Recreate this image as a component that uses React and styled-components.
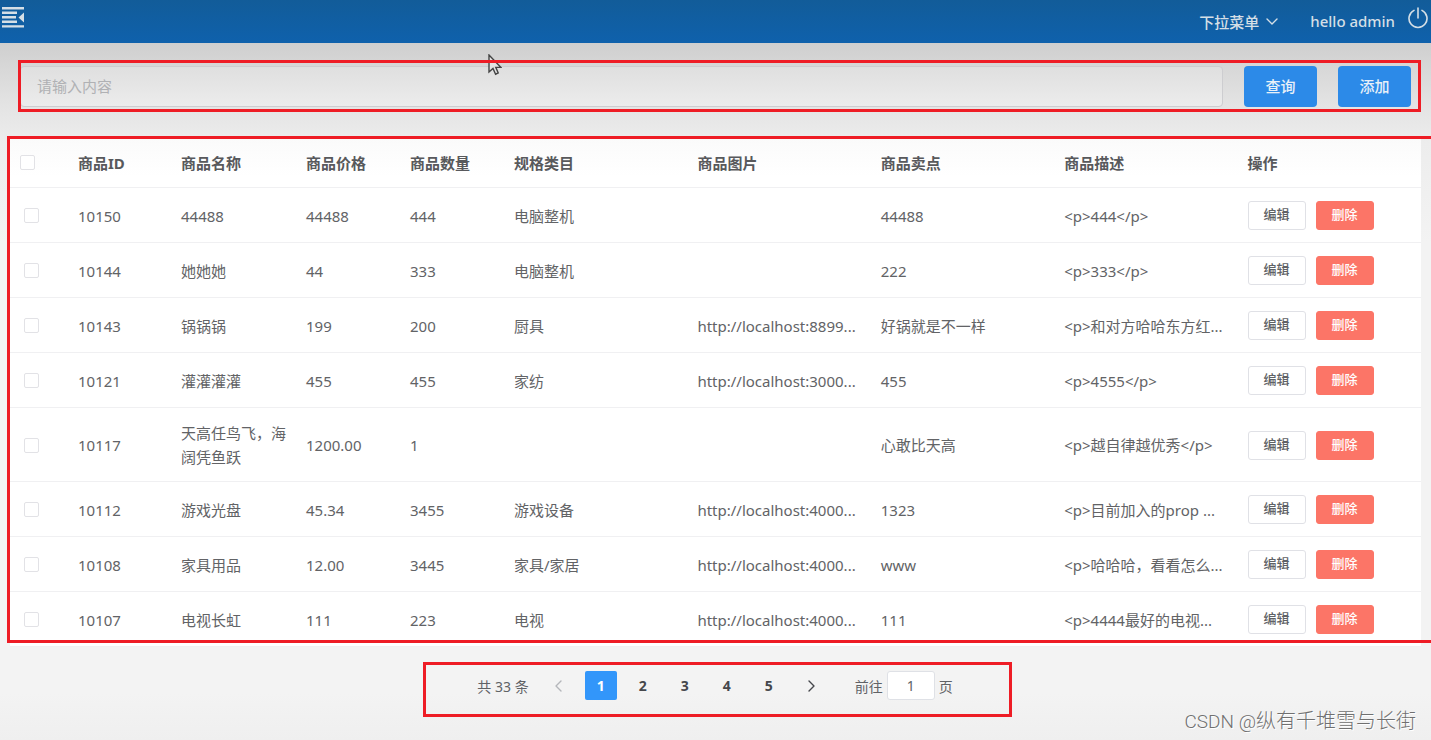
import React, { useState } from 'react';
import styled, { createGlobalStyle, css } from 'styled-components';

const GlobalStyle = createGlobalStyle`
  * {
    box-sizing: border-box;
  }
  body {
    margin: 0;
    background: #f2f2f2;
  }
  body, button, input {
    font-family: 'Noto Sans', 'Noto Sans CJK SC', sans-serif;
    font-size: 15px;
  }
  button {
    padding: 0;
    cursor: pointer;
  }
`;

const frame = css`
  position: relative;
  &::after {
    content: '';
    position: absolute;
    inset: 0;
    border: 3px solid #ee1c25;
    pointer-events: none;
  }
`;

const Page = styled.div`
  position: relative;
  min-height: 100vh;
  display: flex;
  flex-direction: column;
`;

const Header = styled.header`
  height: 43px;
  padding: 0 3px 0 2px;
  display: flex;
  justify-content: space-between;
  align-items: flex-start;
  background: linear-gradient(#125c99, #0f61ac);
  color: #d5dfe6;
`;

const HeaderRight = styled.div`
  display: flex;
  align-items: flex-start;
`;

const IconButton = styled.button`
  border: none;
  background: none;
  color: inherit;
  display: flex;
  padding-top: 6px;
`;

const DropButton = styled.button`
  border: none;
  background: none;
  color: inherit;
  display: flex;
  align-items: center;
  gap: 7px;
  height: 43px;
  margin-right: 32px;
  font-weight: 500;
`;

const Hello = styled.span`
  line-height: 43px;
  margin-right: 13px;
  font-weight: 500;
`;

const Main = styled.main`
  flex: 1;
  padding-left: 4px;
  background: linear-gradient(#cfcfcf, #e3e3e3 60px, #ededed 100px, #f3f3f3 200px, #f3f3f3 650px, #efefef);
`;

const SearchBar = styled.form`
  ${frame}
  display: flex;
  gap: 21px;
  margin: 17px 10px 24px 14px;
  padding: 6px 10px 5px 2px;
`;

const SearchInput = styled.input`
  flex: 1;
  min-width: 0;
  height: 41px;
  padding: 0 16px 2px;
  border: 1px solid #cdcdd0;
  border-radius: 4px;
  background: linear-gradient(#dfdfdf, #ececec);
  color: #606266;
  outline: none;
  &::placeholder {
    color: #b0b1b4;
    opacity: 1;
  }
`;

const MainButton = styled.button`
  width: 73px;
  height: 41px;
  padding-bottom: 2px;
  border: none;
  border-radius: 4px;
  background: #2c8ae8;
  color: #e8f0f8;
  font-weight: 500;
`;

const Cursor = styled.svg`
  position: absolute;
  left: 470px;
  top: -6px;
`;

const Panel = styled.section`
  ${frame}
  margin-left: 6px;
  padding-right: 10px;
  &::after {
    inset: 0 0 4px -3px;
    border-right: none;
  }
`;

const Table = styled.table`
  width: 100%;
  table-layout: fixed;
  border-collapse: separate;
  border-spacing: 0;
  background: linear-gradient(#fafafa, #fff 40px);
  color: #626366;
`;

const Col = styled.col`
  width: ${({ $width }) => ($width ? `${$width}px` : 'auto')};
`;

const Th = styled.th`
  height: 52px;
  padding: 2px 10px 0;
  border-bottom: 1px solid #f0f0f2;
  text-align: left;
  font-weight: 700;
  color: #58595c;
`;

const Td = styled.td`
  padding: 13px ${({ $check }) => ($check ? 14 : 10)}px 12px;
  border-bottom: 1px solid #f0f0f2;
  line-height: 24px;
  overflow: hidden;
  text-overflow: ellipsis;
  white-space: ${({ $nowrap }) => ($nowrap ? 'nowrap' : 'normal')};
`;

const Checkbox = styled.input`
  appearance: none;
  display: block;
  width: 15px;
  height: 15px;
  margin: 0;
  border: 1px solid #e2e2e6;
  border-radius: 2px;
  background: #fff;
  &:checked {
    background: #3296fa;
  }
`;

const Actions = styled.div`
  display: flex;
  gap: 10px;
`;

const SmallButton = styled.button`
  width: 58px;
  height: 29px;
  padding-bottom: 3px;
  border: 1px solid ${({ $danger }) => ($danger ? '#fc7567' : '#e0e1e6')};
  border-radius: 3px;
  background: ${({ $danger }) => ($danger ? '#fc7567' : '#fff')};
  color: ${({ $danger }) => ($danger ? '#fff' : '#606266')};
  font-size: 13px;
  font-weight: 500;
  line-height: 24px;
`;

const Pagination = styled.nav`
  ${frame}
  display: flex;
  align-items: center;
  width: fit-content;
  margin: 15px auto 0;
  padding: 9px 59px 17px 54px;
  font-size: 14px;
  color: #606266;
`;

const Pages = styled.div`
  display: flex;
  gap: 10px;
  margin: 0 28px 0 14px;
`;

const PageButton = styled.button`
  display: flex;
  align-items: center;
  justify-content: center;
  width: 32px;
  height: 29px;
  border: none;
  border-radius: 2px;
  background: ${({ $active }) => ($active ? '#3296fa' : 'transparent')};
  color: ${({ $active }) => ($active ? '#fff' : '#45474c')};
  font-size: 14px;
  font-weight: 700;
  &:disabled {
    color: #b4b6ba;
  }
`;

const Jump = styled.label`
  display: flex;
  align-items: center;
  gap: 4px;
`;

const JumpInput = styled.input`
  width: 48px;
  height: 29px;
  border: 1px solid #dfe1e6;
  border-radius: 3px;
  background: #fff;
  color: #606266;
  font-size: 14px;
  text-align: center;
`;

const Watermark = styled.div`
  position: absolute;
  right: 15px;
  bottom: 4px;
  font-family: Roboto, 'Noto Sans CJK SC', sans-serif;
  font-size: 20px;
  font-weight: 300;
  line-height: 28px;
  color: #707070;
  text-shadow: 1px 1px 0 #fff;
`;

const Latin = styled.span`
  font-size: 19px;
`;

const columns = [
  { title: '商品ID', key: 'id', width: 103 },
  { title: '商品名称', key: 'title', width: 125, wrap: true },
  { title: '商品价格', key: 'price', width: 104 },
  { title: '商品数量', key: 'num', width: 104 },
  { title: '规格类目', key: 'category' },
  { title: '商品图片', key: 'image' },
  { title: '商品卖点', key: 'sellPoint' },
  { title: '商品描述', key: 'descs' },
];

const goods = [
  { id: '10150', title: '44488', price: '44488', num: '444', category: '电脑整机', image: '', sellPoint: '44488', descs: '<p>444</p>' },
  { id: '10144', title: '她她她', price: '44', num: '333', category: '电脑整机', image: '', sellPoint: '222', descs: '<p>333</p>' },
  { id: '10143', title: '锅锅锅', price: '199', num: '200', category: '厨具', image: 'http://localhost:8899...', sellPoint: '好锅就是不一样', descs: '<p>和对方哈哈东方红...' },
  { id: '10121', title: '灌灌灌灌', price: '455', num: '455', category: '家纺', image: 'http://localhost:3000...', sellPoint: '455', descs: '<p>4555</p>' },
  { id: '10117', title: '天高任鸟飞，海阔凭鱼跃', price: '1200.00', num: '1', category: '', image: '', sellPoint: '心敢比天高', descs: '<p>越自律越优秀</p>' },
  { id: '10112', title: '游戏光盘', price: '45.34', num: '3455', category: '游戏设备', image: 'http://localhost:4000...', sellPoint: '1323', descs: '<p>目前加入的prop ...' },
  { id: '10108', title: '家具用品', price: '12.00', num: '3445', category: '家具/家居', image: 'http://localhost:4000...', sellPoint: 'www', descs: '<p>哈哈哈，看看怎么...' },
  { id: '10107', title: '电视长虹', price: '111', num: '223', category: '电视', image: 'http://localhost:4000...', sellPoint: '111', descs: '<p>4444最好的电视...' },
];

const FoldIcon = () => (
  <svg width="22" height="23" viewBox="0 0 22 23" fill="currentColor">
    <path d="M0 1h22v2.4H0zM0 5.6h15V8H0zM0 10h14v2.4H0zM0 14.6h15V17H0zM0 19.2h22v2.4H0zM22 6.5v10L16.5 11.5z" />
  </svg>
);

const PowerIcon = () => (
  <svg width="20" height="23" viewBox="0 0 20 23" fill="none" stroke="currentColor" strokeWidth="1.6" strokeLinecap="round">
    <path d="M10 2v10M6 4.4a9 9 0 1 0 8 0" />
  </svg>
);

const Arrow = ({ d, width = 12, height = 12, stroke = 1.4 }) => (
  <svg width={width} height={height} viewBox={`0 0 ${width} ${height}`} fill="none" stroke="currentColor" strokeWidth={stroke} strokeLinecap="round" strokeLinejoin="round">
    <path d={d} />
  </svg>
);

const App = () => {
  const [keyword, setKeyword] = useState('');
  const [page, setPage] = useState(1);
  const [checked, setChecked] = useState([]);

  const toggle = (id) => setChecked(checked.includes(id) ? checked.filter((c) => c !== id) : [...checked, id]);
  const toggleAll = () => setChecked(checked.length === goods.length ? [] : goods.map((g) => g.id));

  return (
    <>
      <GlobalStyle />
      <Page>
        <Header>
          <IconButton type="button" aria-label="折叠菜单">
            <FoldIcon />
          </IconButton>
          <HeaderRight>
            <DropButton type="button">
              下拉菜单
              <Arrow d="M1 1l5 5 5-5" height={7} />
            </DropButton>
            <Hello>hello admin</Hello>
            <IconButton type="button" aria-label="退出">
              <PowerIcon />
            </IconButton>
          </HeaderRight>
        </Header>

        <Main>
          <SearchBar onSubmit={(e) => e.preventDefault()}>
            <SearchInput aria-label="搜索" placeholder="请输入内容" value={keyword} onChange={(e) => setKeyword(e.target.value)} />
            <MainButton type="submit">查询</MainButton>
            <MainButton type="button">添加</MainButton>
            <Cursor width="14" height="22" viewBox="0 0 14 22" fill="#e4e4e4" stroke="#444" strokeWidth="1.4">
              <path d="M1 1v17l4-3.6 2.6 5.8 2.6-1.2-2.4-5.6H13z" />
            </Cursor>
          </SearchBar>

          <Panel>
            <Table>
              <colgroup>
                <Col $width={58} />
                {columns.map((c) => (
                  <Col key={c.key} $width={c.width} />
                ))}
                <Col />
              </colgroup>
              <thead>
                <tr>
                  <Th>
                    <Checkbox type="checkbox" aria-label="全选" checked={checked.length === goods.length} onChange={toggleAll} />
                  </Th>
                  {columns.map((c) => (
                    <Th key={c.key}>{c.title}</Th>
                  ))}
                  <Th>操作</Th>
                </tr>
              </thead>
              <tbody>
                {goods.map((g) => (
                  <tr key={g.id}>
                    <Td $check>
                      <Checkbox type="checkbox" aria-label={g.id} checked={checked.includes(g.id)} onChange={() => toggle(g.id)} />
                    </Td>
                    {columns.map((c) => (
                      <Td key={c.key} $nowrap={!c.wrap}>
                        {g[c.key]}
                      </Td>
                    ))}
                    <Td>
                      <Actions>
                        <SmallButton type="button">编辑</SmallButton>
                        <SmallButton type="button" $danger>
                          删除
                        </SmallButton>
                      </Actions>
                    </Td>
                  </tr>
                ))}
              </tbody>
            </Table>
          </Panel>

          <Pagination>
            <span>共 33 条</span>
            <Pages>
              <PageButton type="button" aria-label="上一页" disabled={page === 1} onClick={() => setPage(page - 1)}>
                <Arrow d="M8 1L3 6l5 5" />
              </PageButton>
              {[1, 2, 3, 4, 5].map((n) => (
                <PageButton key={n} type="button" $active={n === page} onClick={() => setPage(n)}>
                  {n}
                </PageButton>
              ))}
              <PageButton type="button" aria-label="下一页" disabled={page === 5} onClick={() => setPage(page + 1)}>
                <Arrow d="M4 1l5 5-5 5" />
              </PageButton>
            </Pages>
            <Jump>
              前往
              <JumpInput value={page} onChange={(e) => setPage(Number(e.target.value) || 1)} />
              页
            </Jump>
          </Pagination>
        </Main>

        <Watermark>
          <Latin>CSDN @</Latin>纵有千堆雪与长街
        </Watermark>
      </Page>
    </>
  );
};

export default App;
